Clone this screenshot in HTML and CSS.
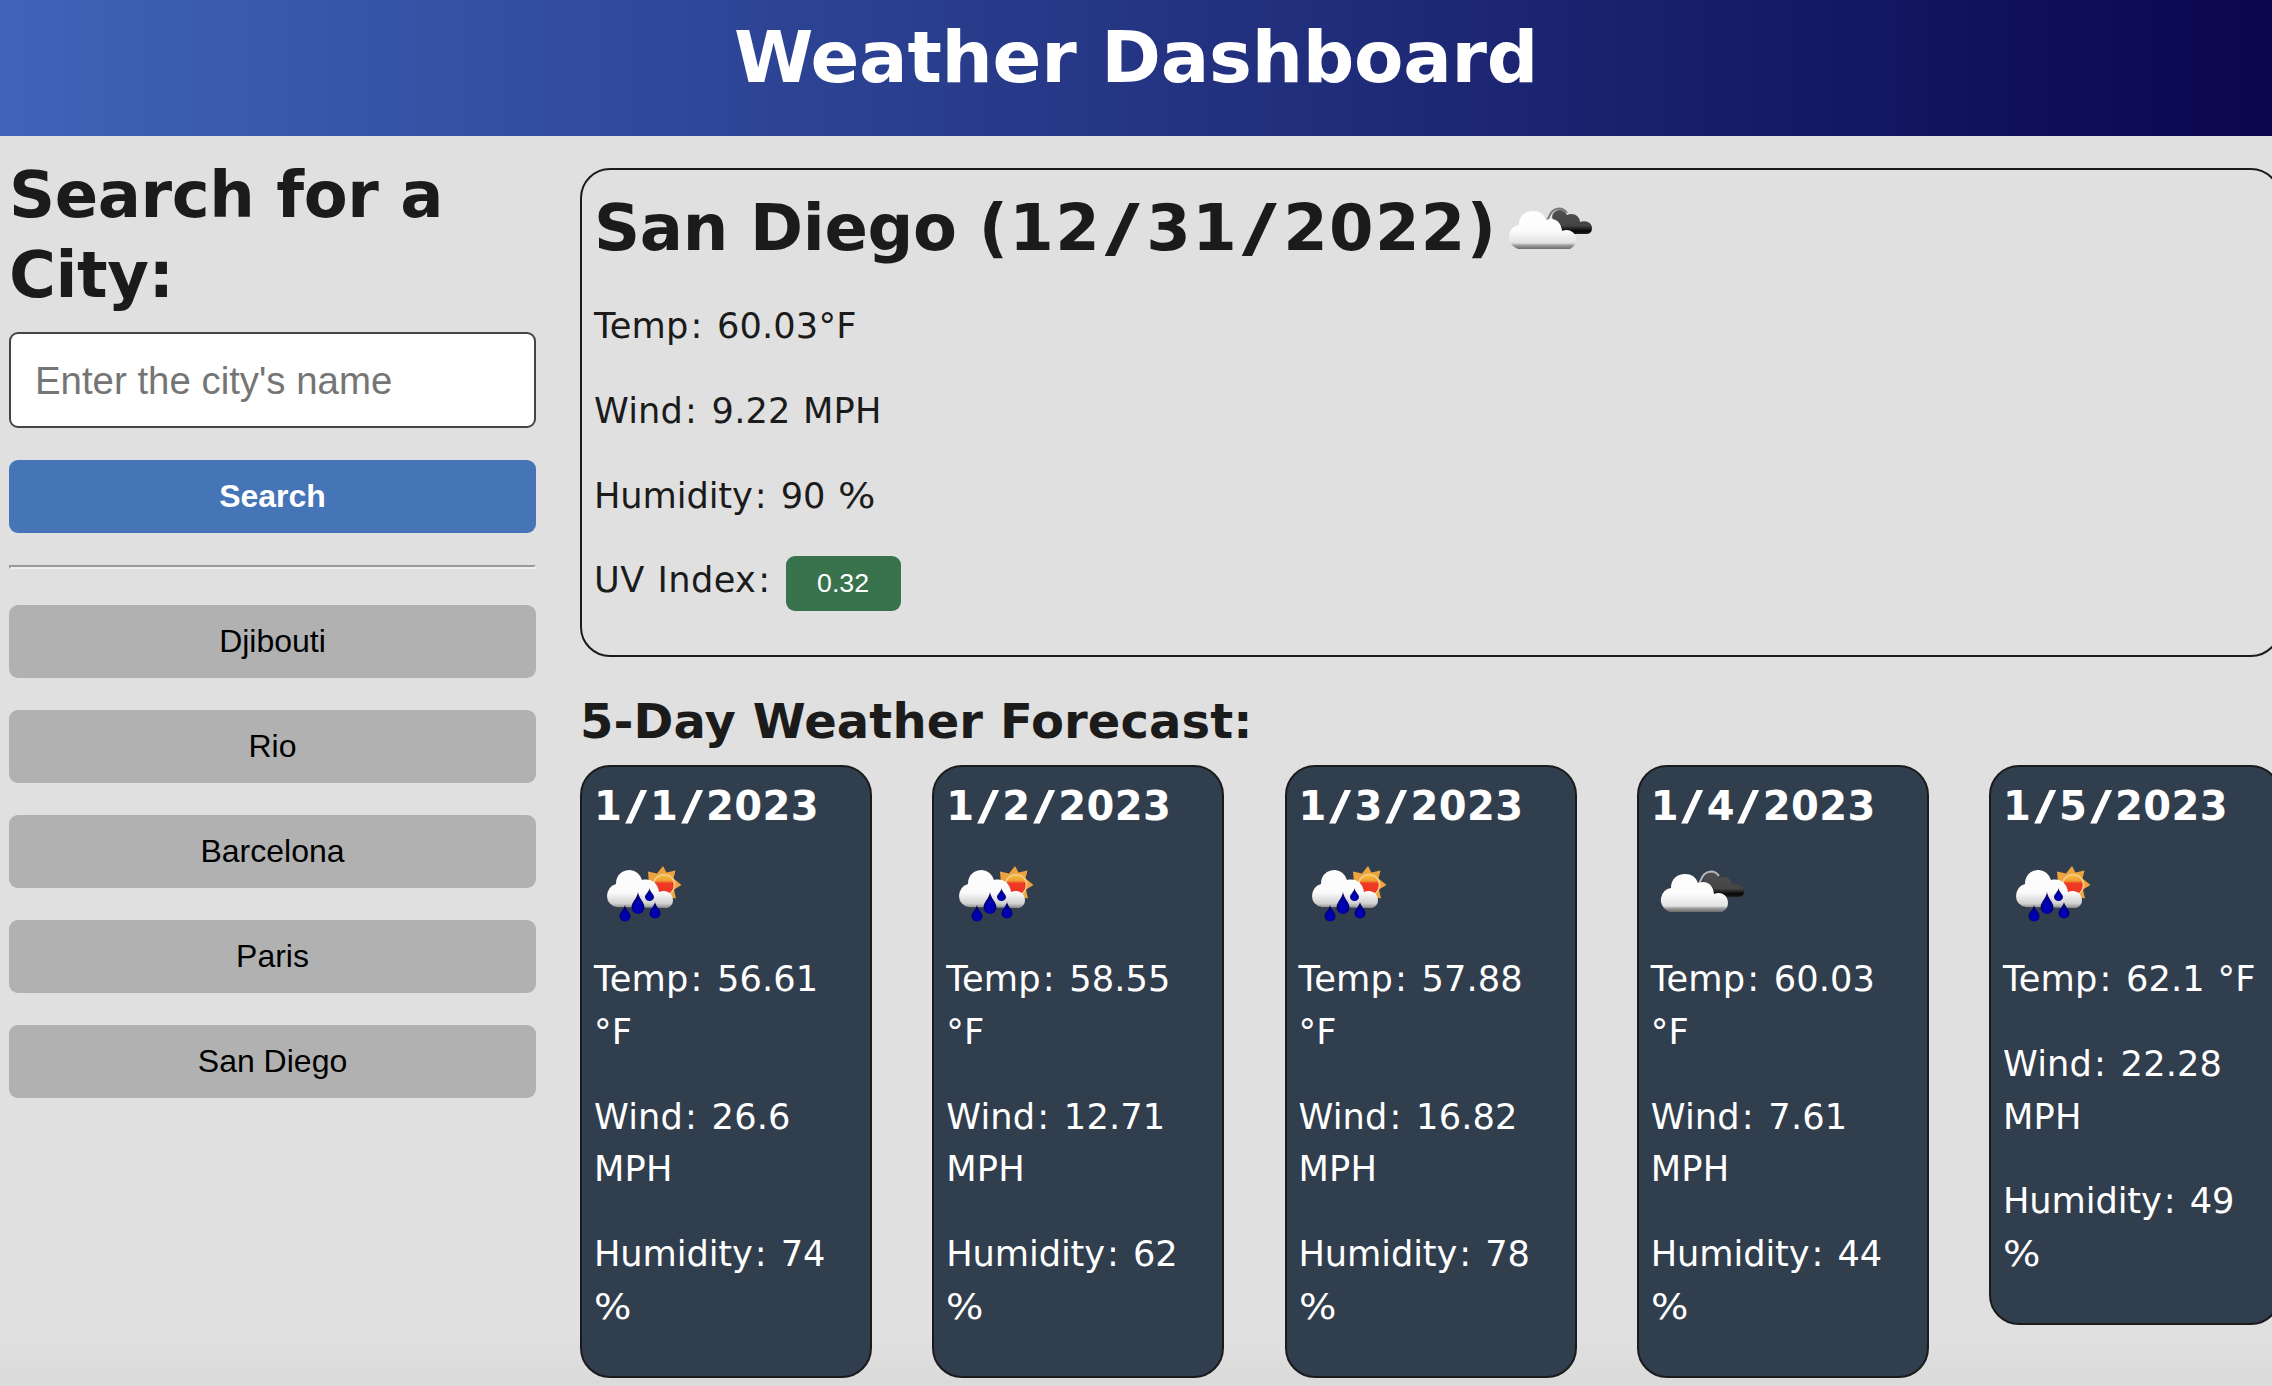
FILE: index.html
```html
<!DOCTYPE html>
<html lang="en">
<head>
<meta charset="utf-8">
<title>Weather Dashboard</title>
<link rel="stylesheet" href="styles.css">
</head>
<body>
<svg class="defs" width="0" height="0" aria-hidden="true">
  <defs>
    <linearGradient id="white" x1="0" y1="0" x2="0" y2="1"><stop offset="0" stop-color="#fff"/><stop offset=".5" stop-color="#fcfcfc"/><stop offset=".84" stop-color="#e2e2e2"/><stop offset=".91" stop-color="#999"/><stop offset="1" stop-color="#6c6c6c"/></linearGradient>
    <linearGradient id="rainy" x1="0" y1="0" x2="0" y2="1"><stop offset="0" stop-color="#fff"/><stop offset=".6" stop-color="#fafafa"/><stop offset=".88" stop-color="#d0d0d0"/><stop offset="1" stop-color="#8b8b8b"/></linearGradient>
    <linearGradient id="dark" x1="0" y1="0" x2="0" y2="1"><stop offset="0" stop-color="#505050"/><stop offset=".65" stop-color="#444"/><stop offset=".88" stop-color="#050505"/><stop offset="1" stop-color="#222"/></linearGradient>
    <linearGradient id="sun" x1="0" y1="0" x2="0" y2="1"><stop offset="0" stop-color="#f3c43c"/><stop offset=".3" stop-color="#f39a35"/><stop offset=".42" stop-color="#ee3a24"/><stop offset="1" stop-color="#ee3524"/></linearGradient>
    <radialGradient id="drop" cx=".5" cy=".7" r=".6"><stop offset="0" stop-color="#0000c4"/><stop offset=".5" stop-color="#0000a4"/><stop offset="1" stop-color="#00004e"/></radialGradient>
    <symbol id="cloudy" viewBox="0 0 100 100">
      <path d="M55 44C51 40 54 33 61 33Q65 33 68 38C74 35 81 39 81 45C87 43 93 46 93 51Q93 57 87 57H66Z" fill="url(#dark)"/>
      <path class="rim" d="M48 43C51 40 51 32 60 31.500C63 31.500 66 33 68 36" fill="none" stroke-width="2"/>
      <path d="M19 72C13 70 9 64 10 58Q12 49 20 48C20 39 26 34 34 34Q44 34 47 43C55 40 62 44 63 54C71 51 77 56 77 63Q77 69 71 72Z" fill="url(#white)"/>
    </symbol>
    <symbol id="rain" viewBox="0 0 100 100">
      <path d="M69 26l3.500 6.500 9-2-2 8 8 6.500-7.500 4.500 2 9-15-3-12-12-1-12 9 2z" fill="#efa33e"/>
      <circle cx="70" cy="45" r="10.500" fill="url(#sun)" stroke="#f3cf8a" stroke-width="1.500"/>
      <path d="M23 67Q13 65 13 56Q14 46 22 44C22 35 28 30 36 30Q45 31 48 40C57 38 64 43 65 52C72 49 79 53 79 60Q79 66 73 68Z" fill="url(#rainy)"/>
      <g fill="url(#drop)">
        <path d="M44 52C45 59 50.500 62 50.500 67.500a6.500 6.500 0 0 1-13 0C37.500 62 43 59 44 52Z"/>
        <path d="M31 65C32 70 36.500 72 36.500 76.500a5.500 5 0 0 1-11 0C25.500 72 30 70 31 65Z"/>
        <path d="M55.500 48C56 52 60 54 60 57a4.500 4 0 0 1-9 0C51 54 55 52 55.500 48Z"/>
        <path d="M61 62C62 67 66.500 69 66.500 73.500a5.500 5 0 0 1-11 0C55.500 69 60 67 61 62Z"/>
      </g>
    </symbol>
  </defs>
</svg>
<header class="header"><h1 class="title">Weather Dashboard</h1></header>
<main class="layout">
  <aside class="sidebar">
    <h2 class="search-title">Search for a<br>City:</h2>
    <input class="city-input" type="text" placeholder="Enter the city's name">
    <button class="btn search">Search</button>
    <hr class="rule">
    <div class="history">
      <button class="btn">Djibouti</button>
      <button class="btn">Rio</button>
      <button class="btn">Barcelona</button>
      <button class="btn">Paris</button>
      <button class="btn">San Diego</button>
    </div>
  </aside>
  <section class="content">
    <article class="current">
      <h2 class="city"><span>San Diego <span class="date">(12<i>/</i>31<i>/</i>2022)</span></span><svg class="icon city-icon"><use href="#cloudy"/></svg></h2>
      <p>Temp<b>:</b> 60.03°F</p>
      <p>Wind<b>:</b> 9.22 MPH</p>
      <p class="humidity">Humidity<b>:</b> 90 <span class="pct">%</span></p>
      <p class="uv"><span>UV Index<b>:</b></span><button class="uv-value">0.32</button></p>
    </article>
    <h3 class="forecast-title">5-Day Weather Forecast:</h3>
    <div class="forecast">
      <article class="day"><h4>1<i>/</i>1<i>/</i>2023</h4><svg class="icon"><use href="#rain"/></svg><p>Temp<b>:</b> 56.61<br>°F</p><p>Wind<b>:</b> 26.6<br>MPH</p><p class="humidity">Humidity<b>:</b> 74<br><span class="pct">%</span></p></article>
      <article class="day"><h4>1<i>/</i>2<i>/</i>2023</h4><svg class="icon"><use href="#rain"/></svg><p>Temp<b>:</b> 58.55<br>°F</p><p>Wind<b>:</b> 12.71<br>MPH</p><p class="humidity">Humidity<b>:</b> 62<br><span class="pct">%</span></p></article>
      <article class="day"><h4>1<i>/</i>3<i>/</i>2023</h4><svg class="icon"><use href="#rain"/></svg><p>Temp<b>:</b> 57.88<br>°F</p><p>Wind<b>:</b> 16.82<br>MPH</p><p class="humidity">Humidity<b>:</b> 78<br><span class="pct">%</span></p></article>
      <article class="day"><h4>1<i>/</i>4<i>/</i>2023</h4><svg class="icon"><use href="#cloudy"/></svg><p>Temp<b>:</b> 60.03<br>°F</p><p>Wind<b>:</b> 7.61<br>MPH</p><p class="humidity">Humidity<b>:</b> 44<br><span class="pct">%</span></p></article>
      <article class="day"><h4>1<i>/</i>5<i>/</i>2023</h4><svg class="icon"><use href="#rain"/></svg><p>Temp<b>:</b> 62.1 °F</p><p>Wind<b>:</b> 22.28<br>MPH</p><p class="humidity">Humidity<b>:</b> 49<br><span class="pct">%</span></p></article>
    </div>
  </section>
</main>
</body>
</html>
```
FILE: styles.css
```css
* { box-sizing: border-box; }
html { overflow: hidden; }
body {
  margin: 0;
  height: 1386px;
  overflow: hidden;
  background: linear-gradient(#e0e0e0 1335px, #dadada 1386px);
  color: #1b1b1b;
  font: 35.2px/52.8px "DejaVu Sans", sans-serif;
  white-space: nowrap;
}
h1, h2, h3, h4, p { margin: 0; }
.defs { display: block; }
.header {
  height: 136px;
  padding-top: 12px;
  background: linear-gradient(to right, #3f64b9, #0a064e);
  text-align: center;
}
.title { color: #fff; font-size: 72px; line-height: 90px; letter-spacing: -.25px; }
.layout { display: flex; }
.sidebar { width: 527px; margin-left: 9px; padding-top: 19px; flex: none; }
.search-title { font-size: 64px; line-height: 80px; letter-spacing: -.4px; }
.city-input {
  display: block;
  width: 100%;
  height: 96px;
  margin-top: 17px;
  padding: 1px 24px 0;
  border: 2px solid #444;
  border-radius: 9px;
  background: #fff;
  font: 38.4px "Liberation Sans", sans-serif;
}
.city-input::placeholder { color: #757575; }
.btn {
  display: block;
  width: 100%;
  height: 73px;
  padding: 0;
  border: 0;
  border-radius: 9px;
  background: #b1b1b1;
  color: #000;
  font: 32px "Liberation Sans", sans-serif;
}
.search { margin-top: 32px; background: #4574b7; color: #fff; font-weight: bold; }
.rule {
  height: 4px;
  margin: 32px 0 36px;
  border: 2px solid;
  border-color: #9a9a9a #eee #eee #9a9a9a;
}
.history { display: grid; gap: 32px; }
.content { width: 1701px; margin-left: 44px; padding-top: 32px; flex: none; }
.current {
  height: 489px;
  padding: 18px 12px 0;
  border: 2px solid #1b1b1b;
  border-radius: 30px;
}
.city {
  display: flex;
  height: 80px;
  margin-bottom: 32px;
  font-size: 64px;
  line-height: 80px;
  letter-spacing: -.3px;
}
.date { letter-spacing: 1.35px; }
.icon { display: block; flex: none; width: 100px; height: 100px; }
.city-icon { margin: -11px 0 0 2px; }
.rim { stroke: var(--rim, #b9b9b9); }
.city-icon { --rim: #777; }
.current p, .day p { margin-bottom: 32px; letter-spacing: .15px; word-spacing: 1.2px; }
.current .humidity, .day .humidity { letter-spacing: -.1px; }
.pct { display: inline-block; transform: scaleX(1.12); transform-origin: left; }
b { padding: 0 .057em; font-weight: inherit; }
i { display: inline-block; margin: 0 .16em; font-style: normal; transform: scaleX(1.5); }
.uv { display: flex; }
.uv span { letter-spacing: .4px; }
.uv-value {
  width: 115px;
  height: 55px;
  margin: 2px 0 0 13px;
  padding: 0;
  border: 0;
  border-radius: 9px;
  background: #39734d;
  color: #fff;
  font: 26.7px "Liberation Sans", sans-serif;
}
.forecast-title { margin: 34px 0 14px; font-size: 48px; line-height: 60px; letter-spacing: .12px; }
.forecast { display: flex; justify-content: space-between; align-items: flex-start; }
.day {
  width: 292px;
  padding: 14px 12px 10px;
  border: 2px solid #1b1b1b;
  border-radius: 30px;
  background: #313e4e;
  color: #fff;
}
.day h4 { font-size: 40px; line-height: 50px; letter-spacing: .4px; }
.day .icon { margin: 9px 0 13px; }
```
